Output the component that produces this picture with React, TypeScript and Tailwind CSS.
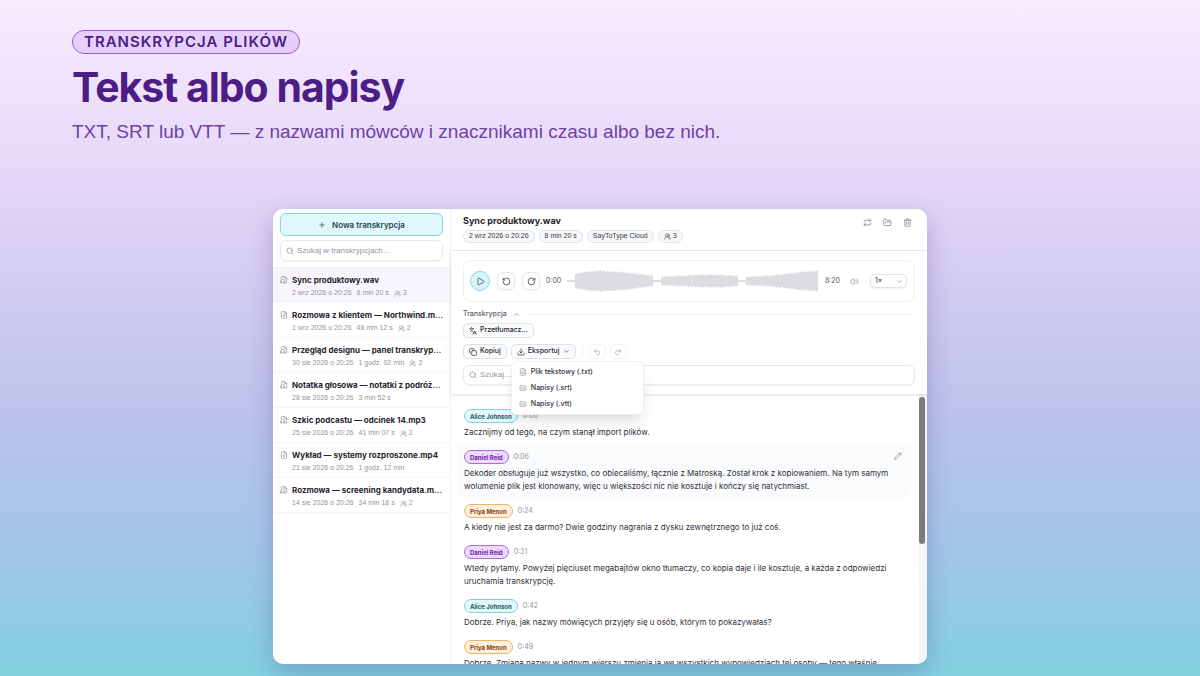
import {
  Captions,
  ChevronDown,
  ChevronUp,
  Copy,
  Download,
  FileHeadphone,
  FilePlay,
  FileText,
  FolderOpen,
  Languages,
  Pencil,
  Play,
  Plus,
  Redo2,
  Repeat,
  RotateCcw,
  RotateCw,
  Search,
  Trash2,
  Undo2,
  UsersRound,
  Volume2,
} from "lucide-react";

type Recording = {
  title: string;
  date: string;
  length: string;
  speakers?: number;
  video?: boolean;
};

const recordings: Recording[] = [
  { title: "Sync produktowy.wav", date: "2 wrz 2026 o 20:26", length: "8 min 20 s", speakers: 3 },
  { title: "Rozmowa z klientem — Northwind.m…", date: "1 wrz 2026 o 20:26", length: "48 min 12 s", speakers: 2, video: true },
  { title: "Przegląd designu — panel transkryp…", date: "30 sie 2026 o 20:26", length: "1 godz. 02 min", speakers: 2 },
  { title: "Notatka głosowa — notatki z podróż…", date: "28 sie 2026 o 20:26", length: "3 min 52 s" },
  { title: "Szkic podcastu — odcinek 14.mp3", date: "25 sie 2026 o 20:26", length: "41 min 07 s", speakers: 2 },
  { title: "Wykład — systemy rozproszone.mp4", date: "21 sie 2026 o 20:26", length: "1 godz. 12 min", video: true },
  { title: "Rozmowa — screening kandydata.m…", date: "14 sie 2026 o 20:26", length: "34 min 18 s", speakers: 2 },
];

const speakerColors: Record<string, string> = {
  "Alice Johnson": "bg-[#e2f8fb] border-[#7fd3dc] text-[#1d5560]",
  "Daniel Reid": "bg-[#ecd9fc] border-[#a86fd8] text-[#6a23a8]",
  "Priya Menon": "bg-[#fff0da] border-[#eeb566] text-[#85401a]",
};

const lines = [
  { speaker: "Alice Johnson", time: "0:00", text: "Zacznijmy od tego, na czym stanął import plików." },
  {
    speaker: "Daniel Reid",
    time: "0:06",
    text: "Dekoder obsługuje już wszystko, co obiecaliśmy, łącznie z Matroską. Został krok z kopiowaniem. Na tym samym wolumenie plik jest klonowany, więc u większości nic nie kosztuje i kończy się natychmiast.",
    active: true,
  },
  { speaker: "Priya Menon", time: "0:24", text: "A kiedy nie jest za darmo? Dwie godziny nagrania z dysku zewnętrznego to już coś." },
  {
    speaker: "Daniel Reid",
    time: "0:31",
    text: "Wtedy pytamy. Powyżej pięciuset megabajtów okno tłumaczy, co kopia daje i ile kosztuje, a każda z odpowiedzi uruchamia transkrypcję.",
  },
  { speaker: "Alice Johnson", time: "0:42", text: "Dobrze. Priya, jak nazwy mówiących przyjęły się u osób, którym to pokazywałaś?" },
  {
    speaker: "Priya Menon",
    time: "0:49",
    text: "Dobrze. Zmiana nazwy w jednym wierszu zmienia ją we wszystkich wypowiedziach tej osoby — tego właśnie",
  },
];

// [x, half height] points of the loudness curve
const envelope = [
  [0, 1], [7, 1], [8, 8], [18, 10], [32, 11], [50, 10], [62, 9], [85, 6], [86, 1], [93, 1],
  [94, 5], [115, 6], [135, 7], [155, 7], [170, 6], [171, 1], [178, 1], [179, 5], [200, 6],
  [220, 8], [235, 10], [251, 11],
];

function levelAt(x: number) {
  const i = Math.max(1, envelope.findIndex((p) => p[0] >= x));
  const [x0, y0] = envelope[i - 1];
  const [x1, y1] = envelope[i];
  const level = y0 + ((y1 - y0) * (x - x0)) / (x1 - x0);
  return level > 2 ? level - ((x * x * 7) % 11) * 0.15 : level;
}

function Waveform() {
  const bars = Array.from({ length: 251 }, (_, x) => x);
  return (
    <svg viewBox="0 0 251 22" preserveAspectRatio="none" className="h-[22px] min-w-0 flex-1">
      {bars.map((x) => {
        const h = levelAt(x);
        return <rect key={x} x={x} y={11 - h} width="1.1" height={h * 2} fill="#dcdde1" />;
      })}
    </svg>
  );
}

function Sidebar() {
  return (
    <aside className="flex w-[178px] shrink-0 flex-col border-r border-[#f3f1f6]">
      <div className="flex flex-col gap-1 border-b border-[#f3f1f6] px-[7px] pt-1 pb-[6px]">
        <button className="flex h-[23px] items-center justify-center gap-[6px] rounded-md border border-[#86d5e0] bg-[#e0f7fc] text-[8px] font-semibold text-[#25464f]">
          <Plus className="size-2" />
          Nowa transkrypcja
        </button>
        <label className="flex h-[21px] items-center gap-[3px] rounded-md border border-[#e9e9ed] px-[5px] shadow-xs">
          <Search className="size-2 text-[#85858f]" />
          <input
            aria-label="Szukaj w transkrypcjach"
            placeholder="Szukaj w transkrypcjach…"
            className="min-w-0 flex-1 font-['Liberation_Sans',sans-serif] text-[8px] outline-none placeholder:text-[#94949c]"
          />
        </label>
      </div>
      <ul>
        {recordings.map((r, i) => {
          const Icon = r.video ? FilePlay : FileHeadphone;
          return (
            <li
              key={r.title}
              className={`flex h-[35px] gap-1 border-b border-[#f8f7fa] pt-[6px] pr-2 pl-[7px] ${i === 0 ? "bg-[#f9f5fe]" : ""}`}
            >
              <Icon className="mt-[2px] size-2 shrink-0 text-[#8c8c96]" />
              <div className="min-w-0 whitespace-nowrap">
                <div className="text-[8px] leading-[13px] font-bold text-[#25252b]">{r.title}</div>
                <div className="flex items-center gap-[5px] font-['Liberation_Sans',sans-serif] text-[7px] leading-3 text-[#94949c]">
                  <span>{r.date}</span>
                  <span>{r.length}</span>
                  {r.speakers && (
                    <span className="flex items-center gap-[2px]">
                      <UsersRound className="size-[7px]" />
                      {r.speakers}
                    </span>
                  )}
                </div>
              </div>
            </li>
          );
        })}
      </ul>
    </aside>
  );
}

function Badge({ children }: { children: React.ReactNode }) {
  return (
    <span className="flex h-[13px] items-center gap-[2px] rounded-full border border-[#e2e3e8] bg-[#f7f8fa] px-[5px] font-['Liberation_Sans',sans-serif] text-[7px] text-[#3a3a42]">
      {children}
    </span>
  );
}

function Header() {
  return (
    <header className="flex h-[42px] shrink-0 justify-between border-b border-[#ededf0] pt-[5px] pr-[15px] pl-3">
      <div>
        <h2 className="text-[9px] leading-[14px] font-bold text-[#1f1f24]">Sync produktowy.wav</h2>
        <div className="mt-[2px] flex gap-1">
          <Badge>2 wrz 2026 o 20:26</Badge>
          <Badge>8 min 20 s</Badge>
          <Badge>SayToType Cloud</Badge>
          <Badge>
            <UsersRound className="size-[7px]" />3
          </Badge>
        </div>
      </div>
      <div className="flex h-4 items-center gap-[11px] text-[#82828a]">
        <button aria-label="Ponów"><Repeat className="size-[9px]" /></button>
        <button aria-label="Otwórz folder"><FolderOpen className="size-[9px]" /></button>
        <button aria-label="Usuń"><Trash2 className="size-[9px]" /></button>
      </div>
    </header>
  );
}

function Player() {
  return (
    <div className="flex h-[42px] items-center rounded-lg border border-[#f0f0f3] pr-[7px] pl-[6px] text-[7px] text-[#5c5c66]">
      <button
        aria-label="Odtwórz"
        className="flex size-5 items-center justify-center rounded-full border border-[#86d5e0] bg-[#d9f5f9] text-[#25464f]"
      >
        <Play className="size-[9px]" />
      </button>
      <button
        aria-label="Cofnij"
        className="ml-[7px] flex size-[18px] items-center justify-center rounded-md border border-[#e6e6ea] text-[#303038] shadow-xs"
      >
        <RotateCcw className="size-[9px]" />
      </button>
      <button
        aria-label="Do przodu"
        className="ml-[7px] flex size-[18px] items-center justify-center rounded-md border border-[#e6e6ea] text-[#303038] shadow-xs"
      >
        <RotateCw className="size-[9px]" />
      </button>
      <span className="mr-[6px] ml-[6px] w-[15px]">0:00</span>
      <Waveform />
      <span className="ml-[7px] w-[15px]">8:20</span>
      <Volume2 className="ml-[10px] size-[9px] text-[#9a9aa2]" />
      <div className="relative ml-[11px]">
        <select
          aria-label="Prędkość"
          className="block h-[14px] w-[37px] appearance-none rounded-[5px] border border-[#e2e2e7] bg-white pl-1 text-[7px] text-[#25252b] shadow-xs"
        >
          <option>1×</option>
        </select>
        <ChevronDown className="pointer-events-none absolute top-1 right-1 size-[7px]" />
      </div>
    </div>
  );
}

const menuItem = "flex h-4 items-center gap-1 px-[7px] text-[7px] font-medium text-[#303038]";

function ExportMenu() {
  return (
    <div className="absolute top-full left-0 z-10 mt-[2px] flex w-[133px] flex-col rounded-md border border-[#f0f0f3] bg-white py-[2px] shadow-lg">
      <button className={menuItem}>
        <FileText className="size-2 text-[#9a9aa2]" />
        Plik tekstowy (.txt)
      </button>
      <button className={menuItem}>
        <Captions className="size-2 text-[#9a9aa2]" />
        Napisy (.srt)
      </button>
      <button className={menuItem}>
        <Captions className="size-2 text-[#9a9aa2]" />
        Napisy (.vtt)
      </button>
    </div>
  );
}

const toolButton =
  "flex h-[15px] items-center gap-[3px] rounded-[5px] border border-[#dfe1e6] bg-[#fafbfc] px-[5px] text-[7px] font-medium text-[#25252b]";
const historyButton =
  "flex h-[15px] w-[17px] items-center justify-center rounded-[5px] border border-[#f2f2f5] text-[#a2a2aa]";

function Toolbar() {
  return (
    <div className="relative z-10 shrink-0 px-3 pt-[9px] pb-[9px] shadow-[0_1px_3px_rgba(0,0,0,0.14)]">
      <Player />
      <div className="mt-[6px] flex h-3 items-center gap-[6px] text-[7px] font-medium text-[#5c5c66]">
        Transkrypcja
        <ChevronUp className="size-[7px]" />
        <div className="h-px flex-1 bg-[#f0f0f3]" />
      </div>
      <div className="mt-[3px] flex">
        <button className={toolButton}>
          <Languages className="size-2" />
          Przetłumacz…
        </button>
      </div>
      <div className="mt-[6px] flex items-center gap-1">
        <button className={toolButton}>
          <Copy className="size-2" />
          Kopiuj
        </button>
        <div className="relative">
          <button className={toolButton}>
            <Download className="size-2" />
            Eksportuj
            <ChevronDown className="size-[7px]" />
          </button>
          <ExportMenu />
        </div>
        <div className="mx-[2px] h-[11px] w-px bg-[#f0f0f3]" />
        <button aria-label="Cofnij zmianę" className={historyButton}>
          <Undo2 className="size-2" />
        </button>
        <button aria-label="Ponów zmianę" className={historyButton}>
          <Redo2 className="size-2" />
        </button>
      </div>
      <label className="mt-[6px] flex h-5 items-center gap-[3px] rounded-md border border-[#e9e9ed] px-[5px] shadow-xs">
        <Search className="size-2 text-[#85858f]" />
        <input
          aria-label="Szukaj"
          placeholder="Szukaj…"
          className="min-w-0 flex-1 font-['Liberation_Sans',sans-serif] text-[8px] outline-none placeholder:text-[#94949c]"
        />
      </label>
    </div>
  );
}

function Transcript() {
  return (
    <div className="flex min-h-0 flex-1 overflow-hidden">
      <div className="flex-1 pt-[9px] pr-2 pl-[7px]">
        {lines.map((l) => (
          <div
            key={l.time}
            className={`relative rounded-md px-[6px] pt-[6px] pb-[5px] ${l.active ? "bg-[#fafbfd]" : ""}`}
          >
            <div className="flex items-center gap-[5px] text-[7px] text-[#94949c]">
              <span
                className={`flex h-[14px] items-center rounded-full border px-[5px] text-[6px] font-bold ${speakerColors[l.speaker]}`}
              >
                {l.speaker}
              </span>
              {l.time}
            </div>
            <p className="mt-[3px] text-[8px] leading-[13px] text-[#303038]">{l.text}</p>
            {l.active && (
              <button aria-label="Edytuj" className="absolute top-2 right-[9px] text-[#82828a]">
                <Pencil className="size-2" />
              </button>
            )}
          </div>
        ))}
      </div>
      <div className="bg-[#f5f5f6] pt-[3px] pr-[2px]">
        <div className="h-[147px] w-[6px] rounded-full bg-[#7b7b7b]" />
      </div>
    </div>
  );
}

export default function App() {
  return (
    <div className="flex h-screen flex-col bg-[linear-gradient(180deg,#f9ecfe_0%,#e6d8f8_25%,#d5cdf3_40%,#bdc3ec_60%,#a4c6e9_80%,#82d0e0_100%)] font-['Inter',sans-serif]">
      <div className="flex flex-col items-start px-[72px] pt-[30px] text-[#4c1d84]">
        <span className="flex h-6 items-center rounded-full border border-[#9b5bdc] bg-[#e6d0fb] px-[11px] text-[15px] font-semibold tracking-[1px]">
          TRANSKRYPCJA PLIKÓW
        </span>
        <h1 className="mt-2 text-[41px] leading-[50px] font-bold tracking-tight">Tekst albo napisy</h1>
        <p className="mt-2 font-['Liberation_Sans',sans-serif] text-[19px] leading-6 text-[#6d42a4]">
          TXT, SRT lub VTT — z nazwami mówców i znacznikami czasu albo bez nich.
        </p>
      </div>
      <main className="mx-auto mt-[65px] mb-3 flex min-h-0 w-[54.5%] flex-1 overflow-hidden rounded-[10px] bg-white shadow-[0_8px_24px_rgba(60,30,110,0.25)]">
        <Sidebar />
        <section className="flex min-w-0 flex-1 flex-col">
          <Header />
          <Toolbar />
          <Transcript />
        </section>
      </main>
    </div>
  );
}
